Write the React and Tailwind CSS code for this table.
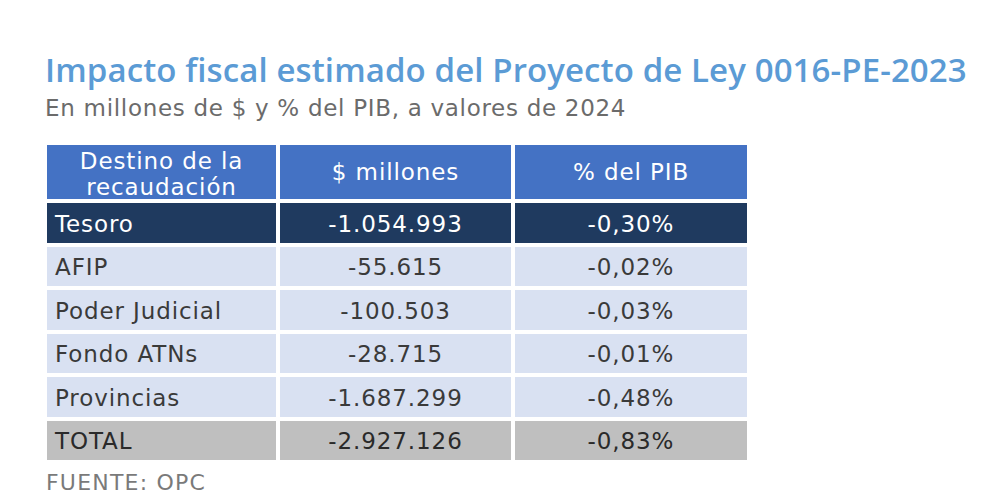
import React from 'react';

const rows = [
  { name: 'Tesoro', amount: '-1.054.993', pct: '-0,30%', kind: 'dark' },
  { name: 'AFIP', amount: '-55.615', pct: '-0,02%', kind: 'light' },
  { name: 'Poder Judicial', amount: '-100.503', pct: '-0,03%', kind: 'light' },
  { name: 'Fondo ATNs', amount: '-28.715', pct: '-0,01%', kind: 'light' },
  { name: 'Provincias', amount: '-1.687.299', pct: '-0,48%', kind: 'light' },
  { name: 'TOTAL', amount: '-2.927.126', pct: '-0,83%', kind: 'total' },
];

const rowStyles = {
  dark: 'bg-[#1f3a5f] text-white',
  light: 'bg-[#d9e1f2] text-[#3a3a3a]',
  total: 'bg-[#bfbfbf] text-[#2a2a2a]',
};

export default function App() {
  return (
    <div className="w-[1000px] h-[497px] bg-white overflow-hidden font-['DejaVu_Sans',sans-serif]">
      <div className="pt-[50px] pl-[45px]">
        <h1 className="font-['Open_Sans',sans-serif] text-[33px] leading-[40px] font-semibold text-[#5b9bd5] tracking-[0.1px]">
          Impacto fiscal estimado del Proyecto de Ley 0016-PE-2023
        </h1>
        <p className="text-[23px] leading-[30px] text-[#6b6b6b] tracking-[0.7px] mt-[3px]">
          En millones de $ y % del PIB, a valores de 2024
        </p>

        <div className="mt-[22px] ml-[2px] grid grid-cols-[229px_231px_232px] gap-[4px] w-[700px] text-[23px] tracking-[0.9px]">
          <div className="h-[54px] bg-[#4472c4] text-white flex items-center justify-center text-center leading-[26px] pt-[3px]">
            Destino de la<br />recaudación
          </div>
          <div className="h-[54px] bg-[#4472c4] text-white flex items-center justify-center pt-[1px]">$ millones</div>
          <div className="h-[54px] bg-[#4472c4] text-white flex items-center justify-center pt-[1px]">% del PIB</div>

          {rows.map((r) => (
            <React.Fragment key={r.name}>
              <div className={`h-[39.5px] flex items-center pl-[8px] pt-[2px] ${rowStyles[r.kind]}`}>{r.name}</div>
              <div className={`h-[39.5px] flex items-center justify-center pt-[2px] ${rowStyles[r.kind]}`}>{r.amount}</div>
              <div className={`h-[39.5px] flex items-center justify-center pt-[2px] ${rowStyles[r.kind]}`}>{r.pct}</div>
            </React.Fragment>
          ))}
        </div>

        <p className="text-[22px] leading-[22px] text-[#7a7a7a] tracking-[1.2px] mt-[12px] ml-[1px]">FUENTE: OPC</p>
      </div>
    </div>
  );
}
